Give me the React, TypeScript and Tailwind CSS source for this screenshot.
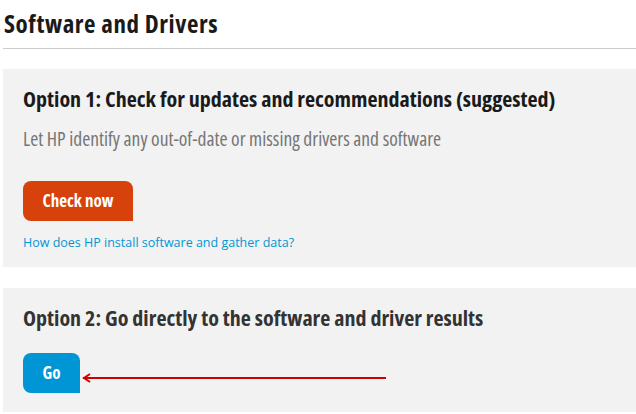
import React from "react";

export default function App() {
  return (
    <div className="w-[636px] h-[414px] bg-white overflow-hidden font-['Open_Sans',sans-serif] font-stretch-condensed">
      <div className="pl-[4px] pt-[8px]">
        <h1 className="text-[25px] leading-[30px] font-bold tracking-[0.6px] text-[#1a1a1a] whitespace-nowrap">Software and Drivers</h1>
      </div>
      <div className="ml-[3px] mt-[10px] h-px bg-[#cccccc]" />
      <section className="ml-[3px] mt-[20px] h-[198px] bg-[#f2f2f2] pl-[20px] pt-[15px] flex flex-col items-start">
        <h2 className="text-[22px] leading-[28px] font-bold text-[#1a1a1a] whitespace-nowrap">
          Option 1: Check for updates and recommendations (suggested)
        </h2>
        <p className="mt-[15px] text-[19.5px] leading-[24px] text-[#767676] whitespace-nowrap">
          Let HP identify any out-of-date or missing drivers and software
        </p>
        <button className="mt-[30px] w-[110px] h-[40px] bg-[#d7410b] text-white text-[17px] font-bold rounded-[8px] rounded-br-none">
          Check now
        </button>
        <a className="mt-[13px] text-[12.5px] leading-[18px] text-[#0096d6] whitespace-nowrap font-stretch-normal">
          How does HP install software and gather data?
        </a>
      </section>
      <section className="ml-[3px] mt-[21px] h-[124px] bg-[#f2f2f2] pl-[20px] pt-[15px] flex flex-col items-start">
        <h2 className="text-[22px] leading-[28px] font-bold text-[#333333] whitespace-nowrap">
          Option 2: Go directly to the software and driver results
        </h2>
        <div className="mt-[22px] flex items-center">
          <button className="w-[57px] h-[40px] bg-[#0096d6] text-white text-[17px] font-bold rounded-[8px] rounded-br-none">
            Go
          </button>
          <svg width="310" height="12" viewBox="0 0 310 12" className="ml-[1px] mt-[10px]">
            <line x1="2" y1="6" x2="305" y2="6" stroke="#d40000" strokeWidth="2" />
            <polyline points="9,2 3,6 9,10" fill="none" stroke="#d40000" strokeWidth="2" />
          </svg>
        </div>
      </section>
    </div>
  );
}
